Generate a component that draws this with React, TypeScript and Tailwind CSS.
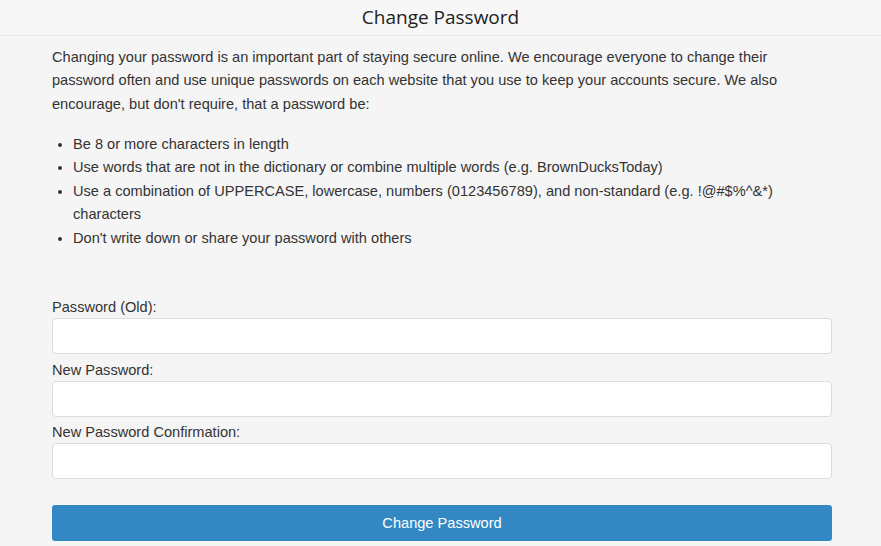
import React from 'react';

const rules = [
  'Be 8 or more characters in length',
  'Use words that are not in the dictionary or combine multiple words (e.g. BrownDucksToday)',
  'Use a combination of UPPERCASE, lowercase, numbers (0123456789), and non-standard (e.g. !@#$%^&*) characters',
  "Don't write down or share your password with others",
];

const fields = ['Password (Old):', 'New Password:', 'New Password Confirmation:'];

export default function App() {
  return (
    <div className="min-h-[546px] w-full bg-[#f5f5f5] text-[#333] font-['Liberation_Sans',Arial,sans-serif]">
      {/* Header */}
      <div className="h-[36px] flex items-center justify-center border-b border-[#ebebeb] bg-[#f7f7f7]">
        <h1 className="font-['Open_Sans',sans-serif] text-[19px] text-[#222] leading-none">Change Password</h1>
      </div>

      <div className="w-[780px] ml-[52px] pt-[10px]">
        <p className="text-[14.6px] leading-[23.3px]">
          Changing your password is an important part of staying secure online. We encourage everyone to change their
          password often and use unique passwords on each website that you use to keep your accounts secure. We also
          encourage, but don't require, that a password be:
        </p>

        <ul className="list-disc pl-[21px] mt-[17px] text-[14.6px] leading-[23.5px]">
          {rules.map(r => (
            <li key={r}>{r}</li>
          ))}
        </ul>

        <form className="mt-[48px]" onSubmit={e => e.preventDefault()}>
          {fields.map(f => (
            <div key={f} className="mb-[6.5px]">
              <label className="block text-[14.6px] leading-[18px] mb-[2px]">{f}</label>
              <input
                type="password"
                className="block w-full h-[36px] bg-white border border-[#dcdcdc] rounded-[4px] px-2 outline-none"
              />
            </div>
          ))}

          <button
            type="submit"
            className="mt-[19px] w-full h-[36px] pt-[3px] bg-[#3388c4] text-white text-[14.6px] rounded-[3px]"
          >
            Change Password
          </button>
        </form>
      </div>
    </div>
  );
}
